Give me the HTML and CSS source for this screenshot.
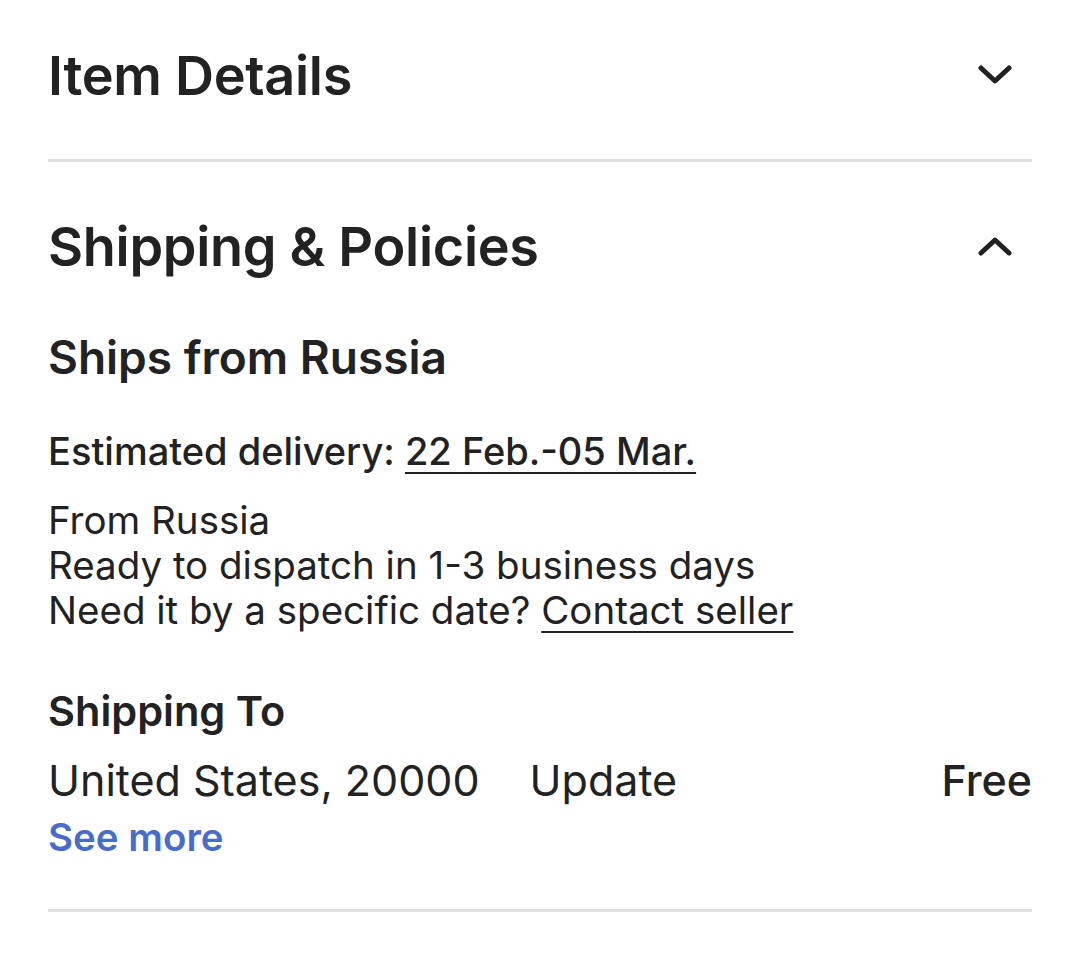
FILE: index.html
```html
<!DOCTYPE html>
<html lang="en">

<head>
    <meta charset="UTF-8">
    <title>Shipping &amp; Policies</title>
    <link rel="stylesheet" href="styles.css">
</head>

<body>
    <div class="panel">
        <!-- Item details (collapsed) -->
        <div class="section-head closed">
            <h2>Item Details</h2>
            <svg class="chevron" width="34" height="20" viewBox="0 0 34 20">
                <path d="M3 3 L17 16 L31 3" fill="none" stroke="#222" stroke-width="5" stroke-linecap="round" stroke-linejoin="round"/>
            </svg>
        </div>

        <!-- Shipping (open) -->
        <div class="section-head open">
            <h2>Shipping &amp; Policies</h2>
            <svg class="chevron" width="34" height="20" viewBox="0 0 34 20">
                <path d="M3 17 L17 4 L31 17" fill="none" stroke="#222" stroke-width="5" stroke-linecap="round" stroke-linejoin="round"/>
            </svg>
        </div>

        <div class="shipping-body">
            <h3>Ships from Russia</h3>
            <p class="estimate">Estimated delivery: <a href="#">22 Feb.-05 Mar.</a></p>
            <p class="info">
                From Russia<br>
                Ready to dispatch in 1-3 business days<br>
                Need it by a specific date? <a href="#">Contact seller</a>
            </p>

            <h4>Shipping To</h4>
            <div class="dest-row">
                <span class="dest">United States, 20000</span>
                <span class="update">Update</span>
                <span class="price">Free</span>
            </div>
            <a class="see-more" href="#">See more</a>
        </div>
    </div>
</body>

</html>
```

FILE: styles.css
```css
body {
    margin: 0;
    padding: 0;
    background-color: #fff;
    font-family: Inter, "Noto Sans", Arial, sans-serif;
    color: #222;
}

.panel {
    padding: 0 48px;
}

.section-head {
    display: flex;
    align-items: center;
    justify-content: space-between;
}

.section-head h2 {
    margin: 0;
    font-size: 54px;
    font-weight: 600;
    letter-spacing: -0.3px;
}

.section-head.closed {
    height: 150px;
    padding-bottom: 9px;
    border-bottom: 3px solid #dedede;
}

.section-head.open {
    margin-top: 49px;
    height: 70px;
}

.chevron {
    margin-right: 20px;
}

.shipping-body {
    padding-bottom: 49px;
    border-bottom: 3px solid #dedede;
}

.shipping-body h3 {
    margin: 48px 0 0;
    font-size: 46px;
    font-weight: 600;
    line-height: 56px;
}

.estimate {
    margin: 43px 0 0;
    font-size: 38px;
    font-weight: 500;
    line-height: 46px;
}

.estimate a, .info a {
    color: #222;
    text-decoration: underline;
    text-underline-offset: 7px;
    text-decoration-thickness: 2px;
}

.info {
    margin: 24px 0 0;
    font-size: 38.5px;
    font-weight: 400;
    line-height: 45px;
}

.shipping-body h4 {
    margin: 53px 0 0;
    font-size: 41.5px;
    font-weight: 600;
    line-height: 50px;
}

.dest-row {
    display: flex;
    margin-top: 18px;
    font-size: 43px;
    line-height: 52px;
}

.update {
    margin-left: 50px;
}

.price {
    margin-left: auto;
    font-weight: 500;
}

.see-more {
    display: inline-block;
    margin-top: 8px;
    font-size: 38.5px;
    font-weight: 600;
    line-height: 46px;
    color: #4a6cc9;
    text-decoration: none;
}
```
